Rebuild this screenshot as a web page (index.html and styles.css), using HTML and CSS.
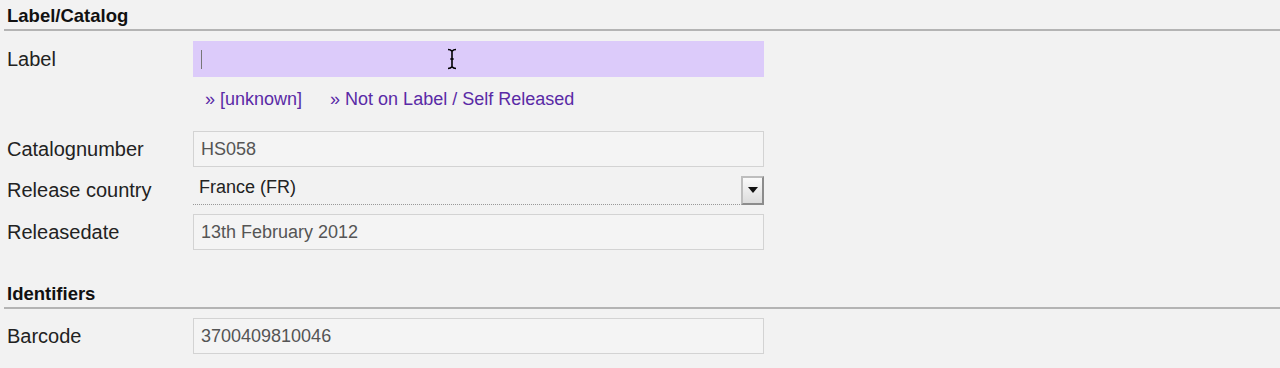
FILE: index.html
```html
<!DOCTYPE html>
<html lang="en">
<head>
  <meta charset="UTF-8" />
  <title>Release editor – Label/Catalog</title>
  <link rel="stylesheet" href="styles.css">
</head>
<body>

<form class="editor">
  <fieldset class="group">
    <div class="legend">Label/Catalog</div>

    <div class="row">
      <label class="row-label" for="label">Label</label>
      <div class="field field-active" id="label">
        <span class="caret"></span>
        <svg class="ibeam" width="12" height="22" viewBox="0 0 12 22">
          <path d="M2 1.5c2 0 3 .5 4 1.8c1-1.3 2-1.8 4-1.8M6 3.3v15.4M2 20.5c2 0 3-.5 4-1.8c1 1.3 2 1.8 4 1.8M4.3 11h3.4" fill="none" stroke="#000" stroke-width="1.6"/>
        </svg>
      </div>
    </div>

    <div class="suggestions">
      <a href="#">» [unknown]</a>
      <a href="#">» Not on Label / Self Released</a>
    </div>

    <div class="row row-spaced">
      <label class="row-label" for="catno">Catalognumber</label>
      <div class="field" id="catno">HS058</div>
    </div>

    <div class="row row-select">
      <label class="row-label" for="country">Release country</label>
      <div class="select" id="country">
        <span class="select-value">France (FR)</span>
        <span class="select-btn"><span class="arrow"></span></span>
      </div>
    </div>

    <div class="row row-date">
      <label class="row-label" for="date">Releasedate</label>
      <div class="field" id="date">13th February 2012</div>
    </div>
  </fieldset>

  <fieldset class="group group-second">
    <div class="legend">Identifiers</div>

    <div class="row">
      <label class="row-label" for="barcode">Barcode</label>
      <div class="field" id="barcode">3700409810046</div>
    </div>
  </fieldset>
</form>

</body>
</html>
```

FILE: styles.css
```css
body {
  margin: 0;
  background: #f2f2f2;
  font-family: 'Liberation Sans', Arial, sans-serif;
  color: #222;
  overflow: hidden;
}

.editor {
  width: 1280px;
}

.group {
  border: none;
  margin: 0;
  padding: 0;
}

.legend {
  margin-left: 4px;
  padding: 5px 0 2px 3px;
  font-size: 18.5px;
  font-weight: bold;
  line-height: 22px;
  color: #111;
  border-bottom: 2px solid #b4b4b4;
}

.group-second {
  margin-top: 28px;
}

.row {
  display: flex;
  align-items: center;
  padding-left: 7px;
  margin-top: 8px;
}

.legend + .row {
  margin-top: 10px;
}

.group-second .legend + .row {
  margin-top: 9px;
}

.row-spaced {
  margin-top: 21px;
}

.row-date {
  margin-top: 9px;
}

.row-label {
  width: 186px;
  font-size: 20px;
  color: #222;
}

.field {
  position: relative;
  box-sizing: border-box;
  width: 571px;
  height: 36px;
  padding: 0 7px;
  display: flex;
  align-items: center;
  font-size: 18px;
  color: #555;
  background: #f4f4f4;
  border: 1px solid #d3d3d3;
}

.field-active {
  background: #dccbfa;
  border-color: #dccbfa;
}

.caret {
  width: 1px;
  height: 19px;
  background: #777;
}

.ibeam {
  position: absolute;
  left: 252px;
  top: 6px;
}

.suggestions {
  display: flex;
  gap: 28px;
  margin: 11px 0 0 205px;
  font-size: 18px;
  line-height: 22px;
}

.suggestions a {
  color: #5a2aa6;
  text-decoration: none;
}

.select {
  box-sizing: border-box;
  width: 571px;
  height: 30px;
  display: flex;
  align-items: center;
  justify-content: space-between;
  border-bottom: 1px dotted #999;
}

.select-value {
  padding-left: 6px;
  font-size: 18px;
  color: #222;
  margin-top: -4px;
}

.select-btn {
  box-sizing: border-box;
  width: 23px;
  height: 29px;
  margin-top: 1px;
  display: flex;
  align-items: center;
  justify-content: center;
  background: linear-gradient(#fafafa, #dcdcdc);
  border: 2px solid #bdbdbd;
  border-right-color: #8c8c8c;
  border-bottom-color: #8c8c8c;
}

.arrow {
  width: 0;
  height: 0;
  border-left: 5px solid transparent;
  border-right: 5px solid transparent;
  border-top: 6px solid #111;
}
```
